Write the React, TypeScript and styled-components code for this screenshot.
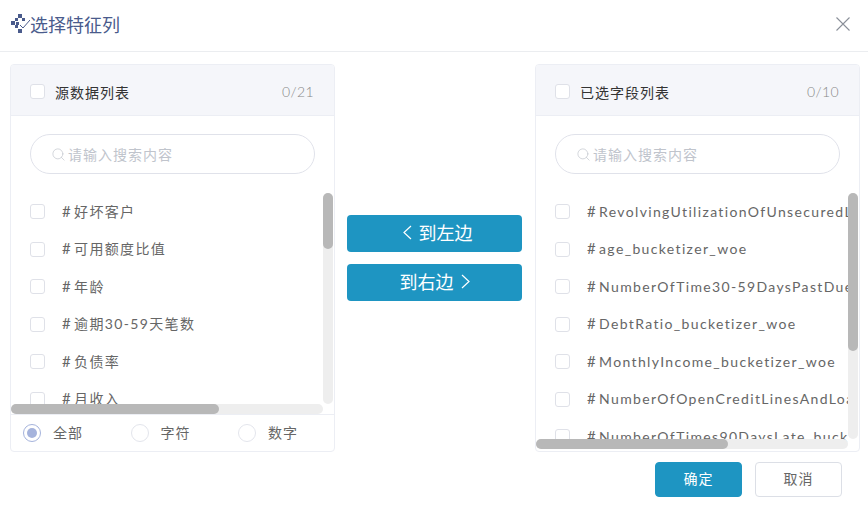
import React from "react"
import styled, { createGlobalStyle } from "styled-components"
import { Search } from "lucide-react"

const cjk = `Lato, "Noto Sans CJK SC", sans-serif`

const Global = createGlobalStyle`
  html, body {
    margin: 0;
    padding: 0;
    background: #fff;
  }
  * {
    box-sizing: border-box;
  }
`

const Dialog = styled.div`
  width: 868px;
  height: 518px;
  overflow: hidden;
  font-family: ${cjk};
  background: #fff;
`

const Header = styled.header`
  height: 52px;
  padding: 0 18px 0 11px;
  display: flex;
  align-items: center;
  justify-content: space-between;
  border-bottom: 1px solid #ebedf0;
`

const Title = styled.h1`
  margin: 0;
  padding-bottom: 4px;
  display: flex;
  align-items: center;
  font-size: 18px;
  font-weight: 400;
  color: #4a5b8c;
`

const CloseButton = styled.span`
  display: flex;
  padding-bottom: 4px;
  color: #8a8f99;
`

const Body = styled.div`
  display: flex;
  align-items: flex-start;
  padding: 12px 8px 0 10px;
`

const Panel = styled.section`
  width: 325px;
  height: 388px;
  display: flex;
  flex-direction: column;
  border: 1px solid #eceef4;
  border-radius: 4px;
  overflow: hidden;
`

const PanelHead = styled.div`
  height: 51px;
  flex: none;
  padding: 3px 20px 0 19px;
  display: flex;
  align-items: center;
  background: #f5f6fa;
  border-bottom: 1px solid #eceef4;
`

const PanelTitle = styled.span`
  margin-left: 10px;
  font-size: 14px;
  letter-spacing: 1px;
  color: #333;
`

const Count = styled.span`
  margin-left: auto;
  font-size: 14px;
  font-weight: 300;
  letter-spacing: 0.4px;
  color: #888;
`

const Box = styled.span`
  width: 15px;
  height: 15px;
  flex: none;
  background: #fff;
  border: 1px solid #dfe1e8;
  border-radius: 3px;
`

const SearchWrap = styled.div`
  flex: none;
  padding: 18px 19px 19px;
`

const SearchBox = styled.div`
  height: 40px;
  padding-left: 20px;
  display: flex;
  align-items: center;
  gap: 2px;
  border: 1px solid #e0e2ea;
  border-radius: 20px;
  font-size: 14px;
  letter-spacing: 1px;
  color: #c0c4cc;
`

const ScrollArea = styled.div<{ $gapBottom?: number }>`
  position: relative;
  flex: 1;
  min-height: 0;
  margin-bottom: ${p => p.$gapBottom ?? 0}px;
  overflow: hidden;
`

const RowList = styled.div`
  height: 100%;
  margin-right: 11px;
  overflow: hidden;
`

const VTrack = styled.div`
  position: absolute;
  top: 0;
  right: 1px;
  bottom: 10px;
  width: 10px;
  border-radius: 5px;
  background: #eeeeee;
`

const HTrack = styled.div`
  position: absolute;
  left: 0;
  right: 11px;
  bottom: 0;
  height: 10px;
  border-radius: 5px;
  background: #eeeeee;
`

const Thumb = styled.div`
  width: 100%;
  height: 100%;
  border-radius: 5px;
  background: #b8b8b8;
`

const Row = styled.div`
  height: 37.5px;
  padding-left: 19px;
  display: flex;
  align-items: center;
  font-size: 14px;
  letter-spacing: 1.35px;
  white-space: nowrap;
  color: #666;
`

const RowText = styled.span`
  margin-left: 17px;
  padding-bottom: 2px;
`

const Hash = styled.span`
  margin-right: 2px;
  font-size: 15px;
`

const RadioRow = styled.div`
  height: 37px;
  flex: none;
  padding-left: 12px;
  display: grid;
  grid-template-columns: repeat(3, 107.5px);
  align-items: center;
  border-top: 1px solid #eceef4;
`

const RadioItem = styled.label`
  display: flex;
  align-items: center;
  gap: 12px;
  font-size: 14px;
  letter-spacing: 1px;
  color: #666;
`

const RadioLabel = styled.span`
  padding-bottom: 3px;
`

const RadioDot = styled.span<{ $on?: boolean }>`
  width: 18px;
  height: 18px;
  display: flex;
  align-items: center;
  justify-content: center;
  border: 1px solid ${p => (p.$on ? "#a5b3dc" : "#e3e5ec")};
  border-radius: 50%;

  &::after {
    content: "";
    width: 10px;
    height: 10px;
    border-radius: 50%;
    background: ${p => (p.$on ? "#a5b3dc" : "transparent")};
  }
`

const Middle = styled.div`
  width: 200px;
  padding: 151px 13px 0 12px;
  display: flex;
  flex-direction: column;
  gap: 12px;
`

const MoveButton = styled.button<{ $inset?: number }>`
  height: 37px;
  padding: 0 0 3px ${p => p.$inset ?? 0}px;
  display: flex;
  align-items: center;
  justify-content: center;
  gap: 7px;
  border: 0;
  border-radius: 4px;
  background: #1e95c2;
  color: #fff;
  font-family: ${cjk};
  font-size: 18px;
`

const Footer = styled.footer`
  padding: 10px 26px 0 0;
  display: flex;
  justify-content: flex-end;
  gap: 13px;
`

const FootButton = styled.button<{ $primary?: boolean }>`
  width: 87px;
  height: 35px;
  padding: 0 0 4px;
  border: 1px solid ${p => (p.$primary ? "#1e95c2" : "#dcdfe6")};
  border-radius: 4px;
  background: ${p => (p.$primary ? "#1e95c2" : "#fff")};
  color: ${p => (p.$primary ? "#fff" : "#666")};
  font-family: ${cjk};
  font-size: 14px;
  letter-spacing: 1px;
`

const LogoIcon = () => (
  <svg width="19" height="19" viewBox="0 0 19 19" fill="#4a5b8c">
    <rect x="7" y="0" width="4" height="4" />
    <rect x="4" y="4" width="3" height="3" />
    <rect x="11" y="4" width="3" height="3" />
    <rect x="0" y="7" width="4" height="4" />
    <rect x="5" y="8" width="3" height="3" />
    <rect x="4" y="11" width="3" height="3" />
    <rect x="7" y="15" width="4" height="4" />
    <path d="M9 11l3 3 7-8" fill="none" stroke="#4a5b8c" strokeWidth="1" />
  </svg>
)

const CloseIcon = () => (
  <svg width="14" height="14" viewBox="0 0 14 14" fill="none" stroke="currentColor" strokeWidth="1.1">
    <path d="M0.5 0.5L13.5 13.5M13.5 0.5L0.5 13.5" />
  </svg>
)

const ChevronIcon = ({ flip }: { flip?: boolean }) => (
  <svg width="9" height="15" viewBox="0 0 9 15" fill="none" stroke="currentColor" strokeWidth="1.2">
    <path d={flip ? "M1 1L8 7.5L1 14" : "M8 1L1 7.5L8 14"} />
  </svg>
)

const sourceFields = ["好坏客户", "可用额度比值", "年龄", "逾期30-59天笔数", "负债率", "月收入"]

const pickedFields = [
  "RevolvingUtilizationOfUnsecuredLines_bucketizer_woe",
  "age_bucketizer_woe",
  "NumberOfTime30-59DaysPastDueNotWorse_bucketizer_woe",
  "DebtRatio_bucketizer_woe",
  "MonthlyIncome_bucketizer_woe",
  "NumberOfOpenCreditLinesAndLoans_bucketizer_woe",
  "NumberOfTimes90DaysLate_bucketizer_woe",
]

type FieldPanelProps = {
  title: string
  count: string
  fields: string[]
  vThumb: number
  hThumb: number
  gapBottom?: number
  children?: React.ReactNode
}

const FieldPanel = ({ title, count, fields, vThumb, hThumb, gapBottom, children }: FieldPanelProps) => (
  <Panel>
    <PanelHead>
      <Box />
      <PanelTitle>{title}</PanelTitle>
      <Count>{count}</Count>
    </PanelHead>
    <SearchWrap>
      <SearchBox>
        <Search size={15} strokeWidth={1.1} />
        请输入搜索内容
      </SearchBox>
    </SearchWrap>
    <ScrollArea $gapBottom={gapBottom}>
      <RowList>
        {fields.map(f => (
          <Row key={f}>
            <Box />
            <RowText>
              <Hash>#</Hash>
              {f}
            </RowText>
          </Row>
        ))}
      </RowList>
      <VTrack>
        <Thumb style={{ height: vThumb }} />
      </VTrack>
      <HTrack>
        <Thumb style={{ width: hThumb }} />
      </HTrack>
    </ScrollArea>
    {children}
  </Panel>
)

export default function App() {
  return (
    <Dialog>
      <Global />
      <Header>
        <Title>
          <LogoIcon />
          选择特征列
        </Title>
        <CloseButton>
          <CloseIcon />
        </CloseButton>
      </Header>
      <Body>
        <FieldPanel title="源数据列表" count="0/21" fields={sourceFields} vThumb={56} hThumb={208}>
          <RadioRow>
            <RadioItem>
              <RadioDot $on />
              <RadioLabel>全部</RadioLabel>
            </RadioItem>
            <RadioItem>
              <RadioDot />
              <RadioLabel>字符</RadioLabel>
            </RadioItem>
            <RadioItem>
              <RadioDot />
              <RadioLabel>数字</RadioLabel>
            </RadioItem>
          </RadioRow>
        </FieldPanel>
        <Middle>
          <MoveButton $inset={6}>
            <ChevronIcon />
            到左边
          </MoveButton>
          <MoveButton>
            到右边
            <ChevronIcon flip />
          </MoveButton>
        </Middle>
        <FieldPanel title="已选字段列表" count="0/10" fields={pickedFields} vThumb={158} hThumb={192} gapBottom={2} />
      </Body>
      <Footer>
        <FootButton $primary>确定</FootButton>
        <FootButton>取消</FootButton>
      </Footer>
    </Dialog>
  )
}
